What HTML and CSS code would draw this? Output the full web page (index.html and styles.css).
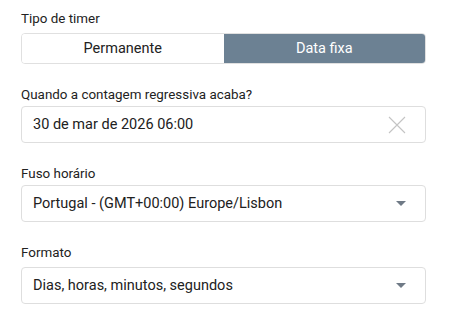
FILE: index.html
```html
<!DOCTYPE html>
<html lang="pt">
<head>
<meta charset="utf-8">
<link rel="stylesheet" href="styles.css">
</head>
<body>
<div class="form">
  <div class="field field-first">
    <div class="label">Tipo de timer</div>
    <div class="segmented">
      <div class="seg">Permanente</div>
      <div class="seg seg-active">Data fixa</div>
    </div>
  </div>
  <div class="field">
    <div class="label">Quando a contagem regressiva acaba?</div>
    <div class="box">
      <span class="value">30 de mar de 2026 06:00</span>
      <svg class="clear" width="18" height="18" viewBox="0 0 18 18"><path d="M1 1 L17 17 M17 1 L1 17" stroke="#c4c4c4" stroke-width="1.1" fill="none"/></svg>
    </div>
  </div>
  <div class="field">
    <div class="label">Fuso horário</div>
    <div class="box">
      <span class="value">Portugal - (GMT+00:00) Europe/Lisbon</span>
      <svg class="caret" width="10" height="5" viewBox="0 0 10 5"><path d="M0 0 L10 0 L5 5 Z" fill="#6f7a86"/></svg>
    </div>
  </div>
  <div class="field field-last">
    <div class="label">Formato</div>
    <div class="box">
      <span class="value">Dias, horas, minutos, segundos</span>
      <svg class="caret" width="10" height="5" viewBox="0 0 10 5"><path d="M0 0 L10 0 L5 5 Z" fill="#6f7a86"/></svg>
    </div>
  </div>
</div>
</body>
</html>
```
FILE: styles.css
```css
* { box-sizing: border-box; }
html, body { margin: 0; padding: 0; background: #ffffff; }
body {
  font-family: Roboto, "Liberation Sans", Arial, sans-serif;
  color: #212121;
}
.form {
  padding: 11px 26px 0 21px;
  display: flex;
  flex-direction: column;
}
.field {
  display: flex;
  flex-direction: column;
  margin-top: 23px;
}
.field-first { margin-top: 0; }
.label {
  font-size: 13.4px;
  line-height: 16px;
  color: #222222;
  margin-bottom: 3px;
}
.field-first .label { margin-bottom: 6px; }
.field-last .label { margin-bottom: 6px; }
.segmented {
  display: flex;
  height: 31px;
  border: 1px solid #e0e0e0;
  border-radius: 4px;
  overflow: hidden;
  margin-right: -1px;
}
.seg {
  flex: 1;
  display: flex;
  align-items: center;
  justify-content: center;
  font-size: 14.5px;
  color: #222222;
  background: #ffffff;
}
.seg-active {
  background: #6c8193;
  color: #ffffff;
}
.box {
  height: 37px;
  border: 1px solid #dedede;
  border-radius: 4px;
  display: flex;
  align-items: center;
  justify-content: space-between;
  padding: 0 19px 0 11px;
  margin-right: -1px;
}
.value {
  font-size: 14.5px;
  color: #212121;
}
.caret { margin-right: 0; }
```
